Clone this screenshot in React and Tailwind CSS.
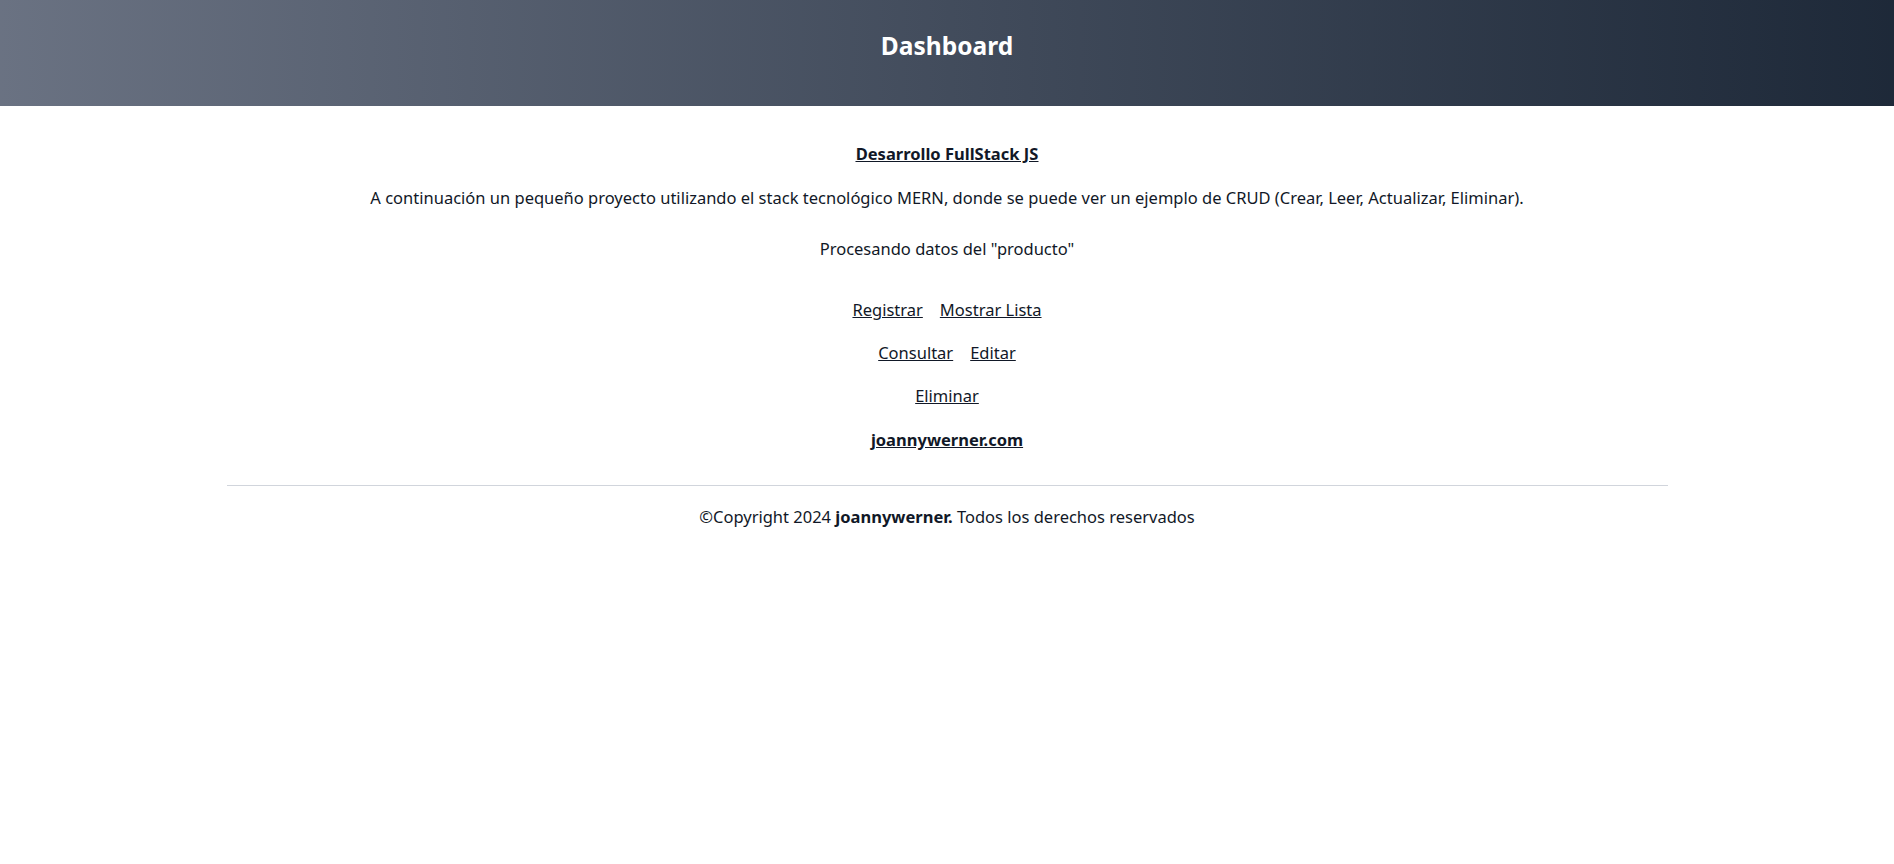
import React from "react";

export default function App() {
  return (
    <div className="min-h-screen bg-white text-[#111827] font-['Noto_Sans',sans-serif]">
      <header className="h-[106px] flex justify-center pt-[30px] bg-gradient-to-r from-gray-500 to-gray-800">
        <h1 className="text-white text-[24.5px] leading-8 font-bold">Dashboard</h1>
      </header>
      <main className="text-center text-[16.5px] leading-6">
        <h2 className="mt-[36px] font-bold underline">
          <a href="#">Desarrollo FullStack JS</a>
        </h2>
        <p className="mt-[20px]">
          A continuación un pequeño proyecto utilizando el stack tecnológico MERN, donde se puede ver un ejemplo de CRUD (Crear, Leer, Actualizar, Eliminar).
        </p>
        <p className="mt-[27px]">Procesando datos del "producto"</p>
        <div className="mt-[37px] flex justify-center gap-[17px]">
          <a href="#" className="underline">Registrar</a>
          <a href="#" className="underline">Mostrar Lista</a>
        </div>
        <div className="mt-[19px] flex justify-center gap-[17px]">
          <a href="#" className="underline">Consultar</a>
          <a href="#" className="underline">Editar</a>
        </div>
        <div className="mt-[19px] flex justify-center">
          <a href="#" className="underline">Eliminar</a>
        </div>
        <div className="mt-[20px] font-bold">
          <a href="#" className="underline">joannywerner.com</a>
        </div>
      </main>
      <footer className="mt-[33px]">
        <hr className="w-[1441px] mx-auto border-gray-300" />
        <p className="mt-[19px] text-center text-[16.5px] leading-6">
          ©Copyright 2024 <span className="font-bold">joannywerner.</span> Todos los derechos reservados
        </p>
      </footer>
    </div>
  );
}
